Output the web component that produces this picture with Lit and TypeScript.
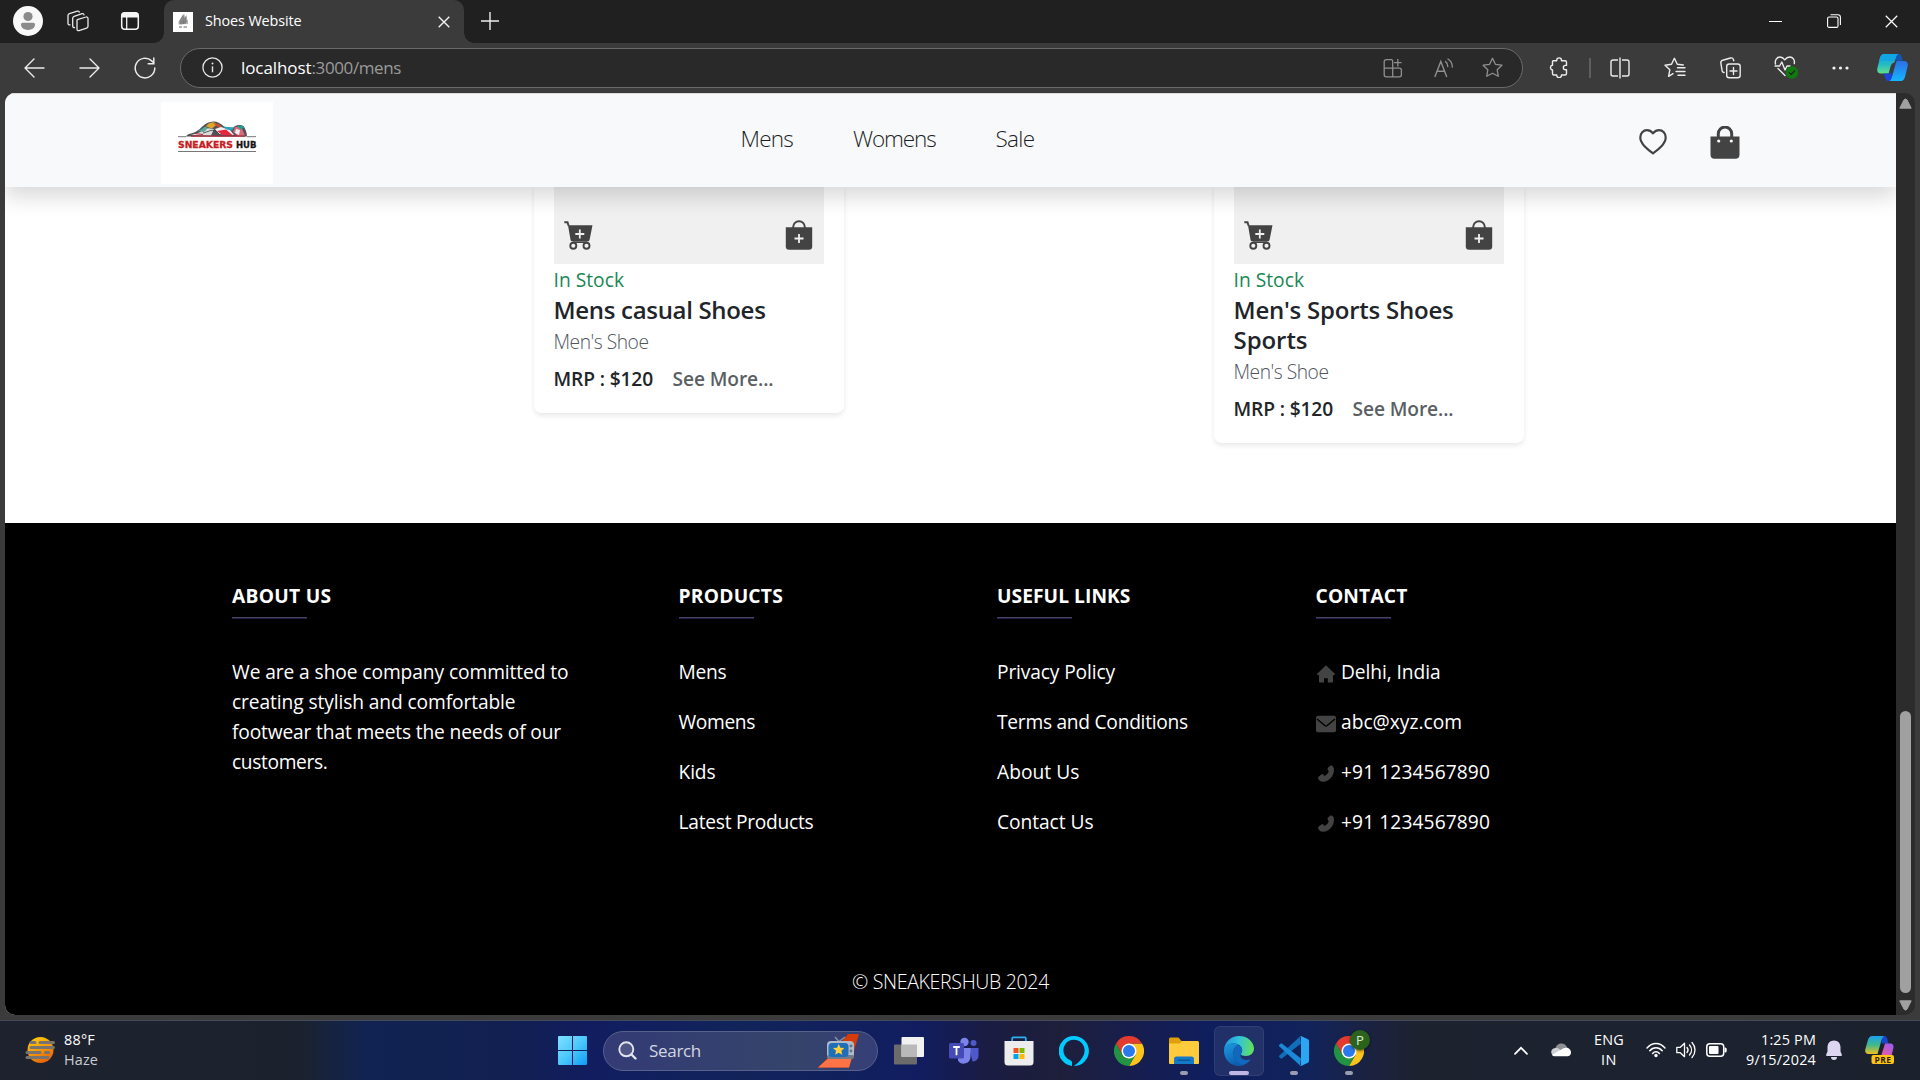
import { LitElement, html, css, TemplateResult } from "lit";
import { customElement, property } from "lit/decorators.js";

/** A run of text whose tracking is adjusted so that it fills a given width. */
@customElement("fit-text")
class FitText extends LitElement {
  @property({ type: Number }) w = 0;
  @property() text = "";
  static styles = css`
    :host { display: block; white-space: pre; overflow: visible; }
    .run { display: inline-block; white-space: pre; }
  `;
  render() {
    return html`<span class="run">${this.text}</span>`;
  }
  updated() {
    const run = this.renderRoot.querySelector(".run") as HTMLElement;
    run.style.letterSpacing = "0px";
    const natural = run.getBoundingClientRect().width;
    if (this.w && this.text.length) {
      run.style.letterSpacing = ((this.w - natural) / this.text.length).toFixed(3) + "px";
      this.style.width = this.w + "px";
    }
  }
}

const t = (text: string, w: number, cls = "") =>
  html`<fit-text class=${cls} .text=${text} .w=${w}></fit-text>`;

/* ---------- browser chrome icons ---------- */
const profile = html`<svg class="ic" width="30" height="30" viewBox="0 0 30 30"><circle cx="15" cy="15" r="15" fill="#f8f8f8"/><circle cx="15" cy="10.5" r="4.6" fill="#8b8b8b"/><path d="M8 18.3a1.6 1.6 0 0 1 1.6-1.6h10.8a1.6 1.6 0 0 1 1.6 1.6c0 3.600-3 5.700-7 5.700s-7-2.100-7-5.700z" fill="#8b8b8b"/></svg>`;
const workspaces = html`<svg class="ic" width="22" height="22" viewBox="0 0 22 22" fill="none" stroke="#e8e8e8" stroke-width="1.3" stroke-linejoin="round" stroke-linecap="round"><path d="M10.300 9.600 19 7a1.500 1.500 0 0 1 2 1.400v7.800a2 2 0 0 1-1.400 1.900L12 20.600a1.500 1.500 0 0 1-2-1.400V10.200z"/><path d="M7.500 17.500a1.500 1.500 0 0 1-1.800-1.500V8.200a2 2 0 0 1 1.400-1.900l8-2.700a1.500 1.500 0 0 1 1.900 1.200"/><path d="M3 14.800A1.500 1.500 0 0 1 1 13.400V5.600a2 2 0 0 1 1.400-1.900l8-2.600a1.500 1.500 0 0 1 1.900 1.100"/></svg>`;
const tabActions = html`<svg class="ic" width="20" height="20" viewBox="0 0 20 20"><rect x="1.700" y="1.700" width="16.600" height="16.600" rx="3" fill="none" stroke="#f5f5f5" stroke-width="1.500"/><path d="M1.500 6.500V4.200a2.700 2.700 0 0 1 2.700-2.700h11.600a2.700 2.700 0 0 1 2.700 2.700v2.300z" fill="#f5f5f5"/><path d="M6.700 6v12" stroke="#f5f5f5" stroke-width="1.300"/></svg>`;
const favicon = html`<svg class="ic" width="20" height="20" viewBox="0 0 20 20"><path d="M0 0h20v20H0z" fill="#fff"/><path d="m5.500 9.500 4-6 1.500-2 1 3 2-1.500-.5 4 1.500 1v4l-9.500.5z" fill="#b4b4b4"/><path d="m7 9 3-5.500.8 4L13 5v6l-6 1zM10.500 8v4M8.500 10l5-1" fill="#8a8a8a" stroke="#777" stroke-width=".7"/><path d="M6 15h3M10.500 15h3.500" stroke="#999" stroke-width="1.500"/></svg>`;
const cross = (s: number, c = "#f2f2f2", sw = 1.4) => html`<svg class="ic" width=${s} height=${s} viewBox="0 0 12 12"><path d="m.7.7 10.600 10.600M11.300.7.7 11.300" stroke=${c} stroke-width=${sw} fill="none"/></svg>`;
const plus = html`<svg class="ic" width="18" height="18" viewBox="0 0 18 18"><path d="M9 0v18M0 9h18" stroke="#ededed" stroke-width="1.400"/></svg>`;
const minimise = html`<svg class="ic" width="13" height="13" viewBox="0 0 13 13"><path d="M0 6.500h13" stroke="#fff" stroke-width="1"/></svg>`;
const restore = html`<svg class="ic" width="14" height="14" viewBox="0 0 14 14" fill="none" stroke="#fff" stroke-width="1.100"><rect x=".6" y="3" width="10.400" height="10.400" rx="1.500"/><path d="M3.500.8h7.500a2.400 2.400 0 0 1 2.400 2.400v7.800"/></svg>`;
const arrow = html`<svg class="ic" width="21" height="20" viewBox="0 0 21 20" fill="none" stroke="#ececec" stroke-width="1.400" stroke-linecap="round" stroke-linejoin="round"><path d="M20 10H1M10 1 1 10l9 9"/></svg>`;
const refresh = html`<svg class="ic" width="22" height="22" viewBox="0 0 22 22" fill="none" stroke="#ececec" stroke-width="1.500" stroke-linecap="round"><path d="M20.800 11A9.800 9.800 0 1 1 17.700 3.900L19.500 5.500"/><path d="M19.800 1v5.700h-5.600"/></svg>`;
const info = html`<svg class="ic" width="21" height="21" viewBox="0 0 21 21"><circle cx="10.500" cy="10.500" r="9.600" fill="none" stroke="#e6e6e6" stroke-width="1.300"/><path d="M10.500 9.300v6" stroke="#e6e6e6" stroke-width="1.400"/><circle cx="10.500" cy="6.400" r="1" fill="#e6e6e6"/></svg>`;
const addApp = html`<svg class="ic" width="20" height="20" viewBox="0 0 20 20" fill="none" stroke="#8f8f8f" stroke-width="1.300"><path d="M9.300 1.600H3.200a2 2 0 0 0-2 2v13.200a2 2 0 0 0 2 2h13.200a2 2 0 0 0 2-2v-4.600a2 2 0 0 0-2-2H1.200M9.700 18.800V3.200a1.600 1.600 0 0 0-1.200-1.600M14.800 1v7.400M11.100 4.700h7.400"/></svg>`;
const readAloud = html`<svg class="ic" width="20" height="20" viewBox="0 0 20 20" fill="none" stroke="#8f8f8f" stroke-width="1.400" stroke-linecap="round"><path d="M1 18.500 6.800 3.500l5.800 15M3 13.300h7.700M11.600 3.600c1.700 1.300 2.200 3 2.200 5M14 1c3 1.900 4.300 4.600 4.300 8"/></svg>`;
const STAR = "m10.500 1.300 2.900 6 6.500.9-4.700 4.600 1.100 6.500-5.800-3.100-5.800 3.100 1.100-6.500L1.100 8.200l6.500-.9z";
const star = html`<svg class="ic" width="21" height="21" viewBox="0 0 21 21"><path d=${STAR} fill="none" stroke="#8f8f8f" stroke-width="1.300" stroke-linejoin="round"/></svg>`;
const puzzle = html`<svg class="ic" width="20" height="21" viewBox="0 0 20 21" fill="none" stroke="#ececec" stroke-width="1.400" stroke-linejoin="round"><path d="M4 3.700h3.700V3.300a2.400 2.400 0 0 1 4.800 0v.4H16a1.500 1.500 0 0 1 1.500 1.500v3.200h-1a2.200 2.200 0 0 0 0 4.400h1v3.700a1.500 1.500 0 0 1-1.500 1.500h-3.500v.2a2.400 2.400 0 0 1-4.800 0v-.2H5A1.500 1.500 0 0 1 3.500 16.500V13a2.400 2.400 0 0 1-.2-4.700h.2V5.200A1.500 1.500 0 0 1 4 3.700z"/></svg>`;
const split = html`<svg class="ic" width="20" height="22" viewBox="0 0 20 22" fill="none" stroke="#ececec" stroke-width="1.400"><path d="M8 3H3a2 2 0 0 0-2 2v12a2 2 0 0 0 2 2h5M12 3h5a2 2 0 0 1 2 2v12a2 2 0 0 1-2 2h-5M10 .5v21"/></svg>`;
const favourites = html`<svg class="ic" width="22" height="21" viewBox="0 0 22 21" fill="none" stroke="#ececec" stroke-width="1.400" stroke-linejoin="round" stroke-linecap="round"><path d="M9 16.600 4.600 19.300l1.200-6.500L1 8.200l6.500-.9 2.900-6 2.900 6 6 .7M13.500 10.800H21M12 14.500h9M14 18.200h7"/></svg>`;
const collections = html`<svg class="ic" width="21" height="22" viewBox="0 0 21 22" fill="none" stroke="#ececec" stroke-width="1.400" stroke-linecap="round"><rect x="6.700" y="7" width="13.500" height="13.800" rx="2.500"/><path d="M13.500 10.500v7M10 14h7M4 15.500l-.6-.2a2.500 2.500 0 0 1-1.300-1.600L.9 6.300A2.500 2.500 0 0 1 2.700 3.200L10.500 1a2.500 2.500 0 0 1 3 1.700l.3 1"/></svg>`;
const essentials = html`<svg class="ic" width="25" height="24" viewBox="0 0 25 24" fill="none" stroke="#ececec" stroke-width="1.400" stroke-linejoin="round" stroke-linecap="round"><path d="M1.500 8C.6 4.400 2.800 1 6 1c2.300 0 3.700 1.300 4.800 2.800C11.900 2.300 13.400 1 15.700 1c3.200 0 5.300 3 4.600 6.500M1 10h4.600l2.200-4 3.200 8 2-4h3M4 12.500l7 7"/><circle cx="18" cy="16.500" r="6.200" fill="#0f7b0f" stroke="none"/><path d="m15.300 16.600 1.900 1.900 3.500-3.700" stroke="#1c2b1c" stroke-width="1.300"/></svg>`;
const dots = html`<svg class="ic" width="17" height="4" viewBox="0 0 17 4" fill="#f2f2f2"><circle cx="2" cy="2" r="1.600"/><circle cx="8.500" cy="2" r="1.600"/><circle cx="15" cy="2" r="1.600"/></svg>`;
const copilot = html`<svg class="ic" width="31" height="27" viewBox="0 0 31 27"><defs><linearGradient id="c1" x1="0" y1="0" x2="0" y2="1"><stop offset="0" stop-color="#1b9de2"/><stop offset=".5" stop-color="#22b8c8"/><stop offset="1" stop-color="#5fe08c"/></linearGradient><linearGradient id="c2" x1="0" y1="0" x2="0" y2="1"><stop offset="0" stop-color="#2b6fe6"/><stop offset="1" stop-color="#16b6ff"/></linearGradient></defs><path d="M19.500 0h2.300c1.800 0 2.500 1.600 3 3.500l1 3.200h-7z" fill="#1356b4"/><path d="M7 0h14c-1.500 1-2 2.500-2.600 4.600l-1 3.900c-2.400.3-3.300 2.200-4 4.500l-1.800 6.500H4C.8 19.500-.4 17 .4 14L2.800 4.600C3.600 1.600 5 0 7 0z" fill="url(#c1)"/><path d="M7 0h14c-1.800 1.400-2.200 4-3 6.700H2.300l.5-2.100C3.600 1.600 5 0 7 0z" fill="#12a5e4"/><path d="M6.500 19.500h6l1.300-3 2 10.500h-4.300c-2.300 0-3-1.600-3.500-3.500z" fill="#1b45d8"/><path d="M24 27H12.500c1.400-1 2-2.500 2.600-4.600l4-14.200c.2-.8.800-1.200 1.600-1.200H27c3.200 0 4.400 2.300 3.600 5.300l-2.400 10C27.400 25.400 26 27 24 27z" fill="url(#c2)"/></svg>`;
const triangle = (down: boolean) => html`<svg class="ic" width="13" height="11" viewBox="0 0 13 11"><path d=${down ? "M.8.800h11.400L8 9.200q-1.500 1.800-3 0z" : "M.8 10.200h11.400L8 1.800q-1.500-1.800-3 0z"} fill="#a0a0a0" stroke="#a0a0a0" stroke-linejoin="round"/></svg>`;

/* ---------- shop icons ---------- */
const logo = html`<svg class="logo" width="112" height="82" viewBox="0 0 112 82">
  <path d="M0 0h112v82H0z" fill="#fff"/>
  <path d="M25 34.500c1-2 3-2.600 6-3.200 4-1 7-3.500 10-6.500 3-3 7-5.300 11.500-5.300 4 0 7.500 2 10.500 5 3 1.600 6 1.600 9.500 1 1.500-2.500 6-3.600 10-1.500 2 3 3.500 7 3.500 10.500z" fill="#4f5259"/>
  <path d="M30 33c6-1.500 11-3 15-7l8 1-3 6.500z" fill="#dcdcda"/>
  <path d="M37 29c3-1 5-3 7-4.500l3 1.500-4 4z" fill="#58a99b"/>
  <path d="M45 24.500c2-3 5-4.400 8-4.200l3 2.200-5 4z" fill="#e0a32b"/>
  <path d="m52 21 6 1 5 5-5-1z" fill="#c8502f"/>
  <path d="m54 27 6-2 9 3 4 5-15-1z" fill="#f5f1f0"/>
  <path d="m56 29 5 4 11 .5-7-6z" fill="#e3283f"/>
  <path d="m62 24.500 4 3 5 1 2-3-6-.5z" fill="#25a5c4"/>
  <path d="m72 30 2-5 6-.5 4 9-7 .5z" fill="#d9697b"/>
  <path d="m76 24 5-.5 2.500 2-4 2z" fill="#269b8d"/>
  <path d="m75 27 4 1-1 5-4-2z" fill="#eee"/>
  <path d="M30 34.200h54M34 31.500l8 1" stroke="#b52736" stroke-width="1.200" fill="none"/>
  <path d="M42 31c5-1 8-4 13-2l4 4" stroke="#33353f" stroke-width=".8" fill="none"/>
  <path d="M17 34.700h8M86 34.700h9M17 49.500h78" stroke="#777" stroke-width="1"/>
  <text x="17" y="45.500" class="l1" textLength="55" lengthAdjust="spacingAndGlyphs">SNEAKERS</text>
  <text x="75" y="45.500" class="l2" textLength="20.500" lengthAdjust="spacingAndGlyphs">HUB</text>
</svg>`;
const heart = html`<svg class="ic" width="28" height="26" viewBox="0 0 28 26"><path d="M14 4.300C12.300 2.300 10.200 1.200 8 1.200c-3.800 0-6.700 3-6.700 7.200 0 3.300 1.600 5.900 4.500 9 2.500 2.600 5.300 4.800 8.200 7 2.900-2.200 5.700-4.400 8.200-7 2.900-3.100 4.500-5.700 4.500-9 0-4.200-2.900-7.200-6.700-7.200-2.200 0-4.300 1.100-6 3.100z" fill="none" stroke="#434343" stroke-width="2.200" stroke-linejoin="round"/></svg>`;
const bag = html`<svg class="ic" width="30" height="33" viewBox="0 0 30 33"><path d="M8.300 11V7.800a6.700 6.700 0 0 1 13.400 0V11" fill="none" stroke="#434343" stroke-width="3"/><path d="M.5 10.500h29v18.300a4 4 0 0 1-4 4h-21a4 4 0 0 1-4-4z" fill="#434343"/><circle cx="8.700" cy="15" r="1.600" fill="#f8f9fb"/><circle cx="21.300" cy="15" r="1.600" fill="#f8f9fb"/></svg>`;
const cartAdd = html`<svg class="ic" width="29" height="29" viewBox="0 0 29 29"><path d="M.3 1.300h3.200l1.100 3.500" fill="none" stroke="#434343" stroke-width="2"/><path d="M4 4.300h24.500l-2.900 14.500a2 2 0 0 1-2 1.700H8.500a2 2 0 0 1-2-1.700z" fill="#434343"/><path d="M15.800 8.500v9M11.300 13h9" stroke="#f0f0f0" stroke-width="1.800"/><circle cx="9.300" cy="24.800" r="3" fill="none" stroke="#434343" stroke-width="1.900"/><circle cx="22.500" cy="24.800" r="3" fill="none" stroke="#434343" stroke-width="1.900"/><path d="M9 21.200h14" stroke="#434343" stroke-width="1.500"/></svg>`;
const bagAdd = html`<svg class="ic" width="28" height="30" viewBox="0 0 28 30"><path d="M8.200 8V7a5.800 5.800 0 0 1 11.600 0v1" fill="none" stroke="#434343" stroke-width="2"/><path d="M.8 7.200h26.400v19.300a3.300 3.300 0 0 1-3.300 3.300H4.100a3.300 3.300 0 0 1-3.300-3.300z" fill="#434343"/><path d="M14 14v9M9.500 18.500h9" stroke="#f0f0f0" stroke-width="1.800"/></svg>`;
const home = html`<svg class="ic" width="20" height="20" viewBox="0 0 20 20"><path d="M10 1.300 1.200 9.800c-.5.500-.2 1.300.5 1.300H3v6.400c0 .6.400 1 1 1h4v-4.300h3.800v4.300h4.200c.6 0 1-.4 1-1v-6.400h1.300c.7 0 1-.8.500-1.300z" fill="#434343"/></svg>`;
const mail = html`<svg class="ic" width="20" height="20" viewBox="0 0 20 20"><rect x="0" y="1.800" width="20" height="16.400" rx="2" fill="#434343"/><path d="m1 5 7.800 6.500q1.200.9 2.400 0L19 5" fill="none" stroke="#000" stroke-width="1.400"/></svg>`;
const phone = html`<svg class="ic" width="20" height="20" viewBox="0 0 20 20"><path d="M14.200 1.700 12.100 3.500c-.8.700-.6 1.600-.2 2.400l.9 1.400c-.8 2-2.200 3.600-4.200 4.700L7.300 10.600c-.7-.5-1.400-.5-2 0L2.800 12.500c-.8.700-.8 1.500-.5 2.300.8 1.800 2.400 2.900 4.700 2.900 6 0 11-6.200 11-11.800 0-2.200-.8-3.500-2.300-4.300-.6-.3-1-.3-1.500.1z" fill="#434343"/></svg>`;

/* ---------- taskbar icons ---------- */
const haze = html`<svg class="ic" width="32" height="28" viewBox="0 0 32 28"><defs><linearGradient id="sun" x1=".2" y1="0" x2=".7" y2="1"><stop offset="0" stop-color="#ffcf0a"/><stop offset="1" stop-color="#e85e08"/></linearGradient></defs><circle cx="16.500" cy="14" r="13" fill="url(#sun)"/><path d="M7 6.500h4M16 6.500h13.500M7 11.500h22.500M3 16.500h13M21.500 16.500h3M3 21.500h21" stroke="#77736f" stroke-width="3" stroke-linecap="round"/></svg>`;
const start = html`<svg class="ic" width="29" height="29" viewBox="0 0 29 29"><defs><linearGradient id="win" x1="0" y1="0" x2="1" y2="1"><stop offset="0" stop-color="#7fe0ff"/><stop offset=".5" stop-color="#4cc8fb"/><stop offset="1" stop-color="#0f9bf6"/></linearGradient></defs><path d="M1 0h13v14H0V1a1 1 0 0 1 1-1zM15 0h13a1 1 0 0 1 1 1v13H15zM0 15h14v14H1a1 1 0 0 1-1-1zM15 15h14v13a1 1 0 0 1-1 1H15z" fill="url(#win)"/></svg>`;
const magnifier = html`<svg class="ic" width="19" height="19" viewBox="0 0 19 19" fill="none" stroke="#e2e4ee" stroke-linecap="round"><circle cx="8.300" cy="8.300" r="7" stroke-width="1.900" fill="#ffffff22"/><path d="m13.500 13.500 4 4" stroke-width="2.400"/></svg>`;
const tv = html`<svg class="ic" width="42" height="34" viewBox="0 0 42 34"><path d="M30 0h11L31 33.500H0L12 22z" fill="#d83b0a"/><path d="M0 33.500 14 21l20 2-3 10.500z" fill="#ff7346"/><path d="m17 3 4 4.500L27 3" stroke="#8793a5" fill="none" stroke-width="1.300"/><rect x="9" y="7" width="27" height="17" rx="4" fill="#b1bac6"/><rect x="9" y="21" width="27" height="4" rx="2" fill="#717b8b"/><rect x="10.500" y="9" width="20" height="14" rx="3.500" fill="#1d6fba"/><path d="m20.700 10 1.700 3.700 4 .4-3 2.700.9 4-3.600-2.100-3.500 2.100.8-4-3-2.700 4.100-.4z" fill="#ffd03b"/><circle cx="33" cy="12" r="1.400" fill="#687286"/><circle cx="33" cy="17" r="1.400" fill="#687286"/></svg>`;
const taskView = html`<svg class="ic" width="30" height="28" viewBox="0 0 30 28"><rect x="0" y="7.500" width="23" height="20" rx="1" fill="#6b6b6b"/><rect x="7.500" y="0" width="22.500" height="20" rx="1" fill="#f1f1f1"/><path d="M7.500 7.500H23V20H7.500z" fill="#b9b9b9"/></svg>`;
const teams = html`<svg class="ic" width="30" height="28" viewBox="0 0 30 28"><circle cx="24.500" cy="6" r="3" fill="#5059c9"/><path d="M20 11h9.500v8a5.500 5.500 0 0 1-6 5.500z" fill="#5059c9"/><circle cx="15.500" cy="5" r="4.200" fill="#7b83eb"/><path d="M9 11h12.500v9a6.800 6.800 0 0 1-12.500 3.500z" fill="#7b83eb"/><rect x="0" y="6" width="15" height="15.500" rx="1.500" fill="#444bb6"/><path d="M4.200 10h6.600M7.500 10v8.200" stroke="#fff" stroke-width="1.800"/></svg>`;
const store = html`<svg class="ic" width="30" height="30" viewBox="0 0 30 30"><path d="M8.200 5V2.200a.9.900 0 0 1 .9-.9h11.800a.9.900 0 0 1 .9.900V5" fill="none" stroke="#2cb1ee" stroke-width="1.700"/><path d="M.5 5h29v21a3.500 3.500 0 0 1-3.500 3.500H4A3.500 3.500 0 0 1 .500 26z" fill="#ededed"/><path d="M9.500 12h5v5h-5z" fill="#f25022"/><path d="M15.500 12h5v5h-5z" fill="#7fba00"/><path d="M9.500 18h5v5h-5z" fill="#00a4ef"/><path d="M15.500 18h5v5h-5z" fill="#ffb900"/></svg>`;
const alexa = html`<svg class="ic" width="30" height="30" viewBox="0 0 30 30"><path fill-rule="evenodd" d="M15 0a15 15 0 0 0-2 29.900v-3.600C12.900 24.600 11 24 9 23a10.600 10.600 0 1 1 16.600-8.600C25.500 21 20 26 14.800 30A15 15 0 0 0 15 0z" fill="#00caff"/></svg>`;
const chrome = html`<svg class="ic" width="30" height="30" viewBox="0 0 30 30"><path d="M28 7.500A15 15 0 0 1 15 30l6.500-11.300L15 15V7.500z" fill="#fcc31c"/><path d="M2 7.500 8.500 18.800 15 15V7.500h13a15 15 0 0 0-26 0z" fill="#e33b2e"/><path d="M2 7.500 8.500 18.800 15 15l6.500 3.700L15 30A15 15 0 0 1 2 7.500z" fill="#229342"/><circle cx="15" cy="15" r="7.500" fill="#fff"/><circle cx="15" cy="15" r="6" fill="#2a79ee"/></svg>`;
const folder = html`<svg class="ic" width="30" height="28" viewBox="0 0 30 28"><path d="M0 2a1.500 1.500 0 0 1 1.500-1.500h8L12.500 4H29v8H0z" fill="#e09f06"/><path d="M0 6.500h10.500L13 4h15.500A1.500 1.500 0 0 1 30 5.500V26a1 1 0 0 1-1 1H1a1 1 0 0 1-1-1z" fill="#ffcb3d"/><path d="M5 27v-5a2.500 2.500 0 0 1 2.500-2.500h15A2.500 2.500 0 0 1 25 22v5z" fill="#1579c9"/><path d="M8.500 23.300h13" stroke="#0a5596" stroke-width="1.300"/></svg>`;
const edge = html`<svg class="ic" width="30" height="30" viewBox="0 0 30 30"><defs><linearGradient id="e1" x1="0" y1=".3" x2="1" y2=".4"><stop offset="0" stop-color="#1f96e0"/><stop offset=".5" stop-color="#33c4d8"/><stop offset="1" stop-color="#63e05a"/></linearGradient><linearGradient id="e2" x1="0" y1="0" x2=".5" y2="1"><stop offset="0" stop-color="#1b9de2"/><stop offset="1" stop-color="#0b5cae"/></linearGradient></defs><path d="M0 14C.5 6 7 0 15 0c9 0 15 6.500 15 12.500 0 4.500-3.500 7.500-8 7.500-3.500 0-5-1-5-2 0-.8 1.200-1.500 1.200-3.700C18.200 10 14 7.500 9.700 7.500 5 7.500 1.300 10 0 14z" fill="url(#e1)"/><path d="M0 14c1-4 5-6.500 9.500-6.500 2 0 4 .6 5.500 1.500-3.500 1-5.500 4-5.500 8C9.500 23.500 15 28.500 20 29c-1.500.6-3.300 1-5 1C6.500 30 0 23.300 0 15z" fill="url(#e2)"/><path d="M9.500 17c0-4 2.500-7 5.500-8 2 1 3.200 3 3.200 5.300 0 2.200-1.200 2.900-1.200 3.700-2.500 4.500 4.500 7.500 9.800 5.300-1.800 3-5 5-7.800 5.700C14 28.500 9.500 23.500 9.500 17z" fill="#1268bd"/></svg>`;
const vscode = html`<svg class="ic" width="30" height="30" viewBox="0 0 30 30"><path d="M22 7.500 3.200 22.300a1.200 1.200 0 0 1-1.600 0l-1.200-1.100a1.200 1.200 0 0 1 0-1.800L21 .6z" fill="#0f6fb8"/><path d="M22 22.500 3.200 7.700a1.200 1.200 0 0 0-1.600 0L.4 8.800a1.200 1.200 0 0 0 0 1.800L21 29.400z" fill="#1a8ad6"/><path d="M22 0l7 3.300a1.800 1.800 0 0 1 1 1.600v20.200a1.800 1.800 0 0 1-1 1.600L22 30c-.8 0-1.200-.3-1.500-.8 1 .6 1.500 0 1.500-1V1.800c0-1-.6-1.500-1.500-1 .3-.500.9-.8 1.500-.8z" fill="#2aa6f2"/></svg>`;
const caret = html`<svg class="ic" width="14" height="9" viewBox="0 0 14 9"><path d="m1 7.800 6-6 6 6" fill="none" stroke="#fff" stroke-width="1.700" stroke-linecap="round"/></svg>`;
const cloud = html`<svg class="ic" width="20" height="14" viewBox="0 0 20 14"><path d="M4 7c.5-4 3-6.500 6.300-6.500 2.700 0 5 1.600 5.900 4.200L12 9z" fill="#8e9096"/><path d="M3.500 12.500C-.7 12.500-1 6.200 3.300 5.300c2.200-.6 4 0 5.200 1L15 10z" fill="#cfd0d3"/><path d="M3.500 13.300A3 3 0 0 1 .9 11.700L9.500 7l3-1.700c4-1.800 7.500.7 7.500 4.200 0 2-1.400 3.800-3.700 3.800z" fill="#fff"/></svg>`;
const wifi = html`<svg class="ic" width="20" height="16" viewBox="0 0 20 16" fill="none" stroke="#fff" stroke-width="1.500" stroke-linecap="round"><path d="M1 6C6 0 14 0 19 6M3.800 8.800c3.500-4 8.900-4 12.400 0M6.600 11.500c2-2.300 4.800-2.300 6.800 0"/><circle cx="10" cy="13.500" r="1.700" fill="#fff" stroke="none"/></svg>`;
const volume = html`<svg class="ic" width="20" height="18" viewBox="0 0 20 18" fill="none" stroke="#fff" stroke-width="1.300" stroke-linecap="round" stroke-linejoin="round"><path d="M.8 6.300h3.500L8.500 2.300v13.400L4.300 11.700H.8z"/><path d="M11 6.500c1.300 1.500 1.300 3.500 0 5M13.500 4c2.700 3 2.700 7 0 10M16 1.500c4 4.300 4 10.700 0 15"/></svg>`;
const battery = html`<svg class="ic" width="21" height="14" viewBox="0 0 21 14"><rect x=".8" y=".8" width="16.900" height="12.400" rx="3" fill="none" stroke="#fff" stroke-width="1.500"/><rect x="3" y="3" width="9.500" height="8" rx="1" fill="#fff"/><path d="M18.500 4.500h.7a1.500 1.500 0 0 1 1.500 1.500v2a1.500 1.500 0 0 1-1.500 1.500h-.7z" fill="#fff"/></svg>`;
const bell = html`<svg class="ic" width="16" height="20" viewBox="0 0 16 20" fill="#dcd6f0"><path d="M8 .5c3.800 0 6.500 2.800 6.500 6.500v4.500l1.300 3c.3.700-.1 1.500-1 1.500H1.200c-.9 0-1.300-.8-1-1.500l1.300-3V7C1.500 3.300 4.200.5 8 .5zM5 17h6a3 3 0 0 1-6 0z"/></svg>`;
const copilotPre = html`<svg class="ic" width="30" height="28" viewBox="0 0 30 28"><defs><linearGradient id="p1" x1="0" y1="0" x2="0" y2="1"><stop offset="0" stop-color="#1aa0f0"/><stop offset=".5" stop-color="#3fb98a"/><stop offset="1" stop-color="#f0c020"/></linearGradient><linearGradient id="p2" x1=".8" y1="0" x2=".2" y2="1"><stop offset="0" stop-color="#a35af0"/><stop offset=".6" stop-color="#e05aa8"/><stop offset="1" stop-color="#ff8a5a"/></linearGradient></defs><path d="M17 0h2.500c1.500 0 2.500 1.500 3 3.500l1 4h-7z" fill="#1a45c8"/><path d="M7 0h12c-2 1.500-2.500 4-3.200 6.500L12.500 18H3.500C.7 18-.4 16 .4 13L2.800 4.600C3.600 1.600 5 0 7 0z" fill="url(#p1)"/><path d="M20 7.500h5c3 0 4 2 3.300 5L26 22c-.6 2.500-2 4-4 4h-9c2-1.500 2.500-3.500 3-5.500z" fill="url(#p2)"/><rect x="6.500" y="19" width="22.500" height="9" rx="2" fill="#ffc414"/><text x="9.500" y="26.500" class="pre" textLength="16.500">PRE</text></svg>`;

interface Product { title: [string, number][]; kind: string; }
const products: Product[] = [
  { title: [["Mens casual Shoes", 212]], kind: "Men's Shoe" },
  { title: [["Men's Sports Shoes", 220], ["Sports", 74]], kind: "Men's Shoe" },
];

interface Column { head: string; hw: number; items: { text: string; w: number; icon?: TemplateResult }[]; }
const columns: Column[] = [
  { head: "PRODUCTS", hw: 104.500, items: [{ text: "Mens", w: 47.800 }, { text: "Womens", w: 76.500 }, { text: "Kids", w: 37 }, { text: "Latest Products", w: 135 }] },
  { head: "USEFUL LINKS", hw: 133.500, items: [{ text: "Privacy Policy", w: 118 }, { text: "Terms and Conditions", w: 191 }, { text: "About Us", w: 82.500 }, { text: "Contact Us", w: 96.500 }] },
  { head: "CONTACT", hw: 92, items: [{ text: "Delhi, India", w: 99.500, icon: home }, { text: "abc@xyz.com", w: 121, icon: mail }, { text: "+91 1234567890", w: 149, icon: phone }, { text: "+91 1234567890", w: 149, icon: phone }] },
];
const about: [string, number][] = [
  ["We are a shoe company committed to", 336.500],
  ["creating stylish and comfortable", 283.500],
  ["footwear that meets the needs of our", 329],
  ["customers.", 95.500],
];

@customElement("app-root")
class AppRoot extends LitElement {
  static styles = css`
    :host { display: block; font-family: "Open Sans", "Noto Sans", sans-serif; }
    * { box-sizing: border-box; }
    .ic, .logo { display: block; flex: none; }
    .screen { width: 1920px; height: 1080px; display: flex; flex-direction: column; background: #3b3b3b; overflow: hidden; color: #fff; }

    .tabs { height: 43px; flex: none; background: #202020; display: flex; align-items: center; padding: 0 0 1px 13px; }
    .tools { display: flex; align-items: center; gap: 24px; width: 142px; }
    .tools .wide { margin-left: 7px; }
    .tab { position: relative; width: 300px; height: 43px; margin: 0 0 -1px 9px; background: #3b3b3b; border-radius: 10px 10px 0 0; display: flex; align-items: center; padding: 0 14px 0 9px; }
    .tab::before, .tab::after { content: ""; position: absolute; bottom: 0; width: 10px; height: 10px; }
    .tab::before { left: -10px; background: radial-gradient(circle at 0 0, transparent 9.500px, #3b3b3b 10px); }
    .tab::after { right: -10px; background: radial-gradient(circle at 100% 0, transparent 9.500px, #3b3b3b 10px); }
    .tab .name { margin: -1px auto 0 12px; font-size: 14.400px; line-height: 20px; }
    .new { margin-left: 17px; }
    .wins { margin-left: auto; display: flex; align-items: center; gap: 44.500px; padding-right: 22px; }

    .bar { height: 50px; flex: none; display: flex; align-items: center; padding: 0 0 1px 24px; }
    .navs { display: flex; align-items: center; gap: 34px; width: 156px; }
    .flip { transform: scaleX(-1); }
    .addr { width: 1343px; height: 40px; border: 1px solid #6a6a6a; border-radius: 20px; background: #292929; display: flex; align-items: center; padding: 0 19px 0 21px; }
    .url { display: flex; margin: 0 auto 0 18px; font-size: 17px; line-height: 24px; }
    .url .rest { color: #9b9b9b; }
    .in { display: flex; align-items: center; gap: 31px; }
    .in > :nth-child(2) { margin-right: -3px; }
    .ext { display: flex; align-items: center; margin-left: 26px; }
    .sep { width: 2px; height: 20px; background: #5e5e5e; margin: 0 19px 0 20px; }
    .more { display: flex; align-items: center; gap: 34px; }
    .more > :nth-child(4) { margin: 0 -1px; }
    .cop { margin-left: 28px; }

    .win { height: 922px; flex: none; margin: 0 5px; width: 1910px; display: flex; border-radius: 10px; overflow: hidden; background: #2c2c2c; }
    .view { width: 1891px; background: #fff; display: flex; flex-direction: column; overflow: hidden; }
    .scroll { width: 19px; display: flex; flex-direction: column; align-items: center; padding: 5px 0 4px; }
    .scroll .thumb { width: 11px; height: 282px; border-radius: 5.500px; background: #a0a0a0; margin: auto 0 7px; }

    header { position: relative; z-index: 1; height: 94px; flex: none; background: #f8f9fb; border-top: 1px solid #dcdcdc; box-shadow: 0 10px 20px rgba(0, 0, 0, 0.15); display: flex; align-items: center; padding: 0 156px 0 156px; }
    .logo { margin-top: 4px; }
    .l1, .l2 { font: 700 8.500px "DejaVu Sans", sans-serif; }
    .l1 { fill: #c81c24; stroke: #c81c24; stroke-width: 0.300; }
    .l2 { fill: #161616; stroke: #161616; stroke-width: 0.300; }
    nav { display: flex; gap: 60px; margin: 0 0 3px 467.500px; color: #1b1f23; font-size: 22.500px; font-weight: 300; line-height: 36px; }
    .acts { margin-left: auto; display: flex; align-items: center; gap: 43px; padding-top: 3px; }

    main { height: 336px; flex: none; display: grid; grid-template-columns: 310px 310px; column-gap: 370px; padding-left: 529px; align-items: start; color: #212529; }
    .card { padding: 0 20px 19px; border-radius: 0 0 8px 8px; box-shadow: 0 2.500px 5px rgba(0, 0, 0, 0.085); font-size: 19.200px; line-height: 30px; }
    .shot { height: 77px; background: #f0f0f0; display: flex; align-items: flex-end; justify-content: space-between; padding: 0 11px 14px 10px; margin-bottom: 1px; }
    .stock { color: #198754; }
    .title { font-size: 24px; font-weight: 600; }
    .card fit-text { margin-left: -0.500px; }
    .kind { margin-top: 2px; font-weight: 300; color: #50565c; }
    .price { display: flex; gap: 20px; margin-top: 7px; font-weight: 600; }
    .see { color: #5a5f64; }

    footer { flex: 1; background: #000; display: flex; flex-direction: column; padding-top: 61px; font-size: 19.200px; line-height: 30px; color: #fff; }
    .cols { display: grid; grid-template-columns: 446.500px 318.500px 318.500px 318.500px; padding-left: 227px; }
    .head { font-weight: 700; line-height: 24px; }
    .rule { width: 75px; height: 2px; margin: 9px 0 38px; background: #241d4c; border-top: 1px solid #494558; }
    .list { display: flex; flex-direction: column; gap: 20px; }
    .item { display: flex; gap: 5.500px; height: 30px; }
    .item .ic { margin-top: 7px; }
    .copy { margin: 130px auto 0; font-weight: 300; font-size: 19.500px; }

    .task { margin-top: 5px; height: 60px; border-top: 1px solid #444a5c; display: flex; align-items: center; font-size: 14.400px; line-height: 20px;
      background: linear-gradient(90deg, #1d222e 0, #1b222e 300px, #112352 365px, #112050 500px, #111d60 600px, #11245a 740px, #111d60 920px, #1b1c42 990px, #1d1f3a 1060px, #161e50 1140px, #0f1e5e 1210px, #11235a 1310px, #1b2240 1370px, #1d222f 1420px, #1b222e 100%); }
    .weather { width: 547px; display: flex; align-items: center; gap: 8px; padding: 0 0 1px 24px; }
    .dim { color: #c9ccd2; }
    .cell { position: relative; width: 50px; height: 50px; display: flex; align-items: center; justify-content: center; border-radius: 6px; flex: none; }
    .apps { display: flex; gap: 5px; margin-left: 6px; }
    .apps .open::after { content: ""; position: absolute; bottom: 1px; left: 21px; width: 8px; height: 4px; border-radius: 2px; background: #9a9db0; }
    .apps .active { background: #ffffff14; border: 1px solid #ffffff12; }
    .apps .active::after { left: 14px; width: 20px; bottom: 0; background: #c0b7e6; }
    .badge { position: absolute; right: 4px; top: 4px; width: 20px; height: 20px; border-radius: 50%; background: #2c631c; color: #dcebd6; font-size: 13px; line-height: 20px; text-align: center; box-shadow: 0 1px 3px #0009; }
    .seek { width: 275px; height: 40px; margin-left: 6px; border-radius: 20px; border: 1px solid #57618a; background: linear-gradient(90deg, #343b76, #34446a 70%, #363f78); display: flex; align-items: center; padding: 0 17px 0 14px; }
    .seek .word { margin: 0 auto 0 12px; font-size: 17px; line-height: 24px; color: #d3d6e2; }
    .tray { margin-left: auto; display: flex; align-items: center; padding: 0 25px 1px 0; }
    .gap { width: 23px; }
    .lang { display: flex; flex-direction: column; align-items: center; margin: 0 22px 0 23px; }
    .net { display: flex; align-items: center; gap: 10px; }
    .clock { display: flex; flex-direction: column; align-items: flex-end; margin: 0 10px 0 19px; }
    .pre { font: 700 8.500px "Open Sans", sans-serif; fill: #2a1f00; }
  `;

  private card(p: Product) {
    return html`<article class="card">
      <div class="shot">${cartAdd}${bagAdd}</div>
      ${t("In Stock", 70.500, "stock")}
      ${p.title.map(([s, w]) => t(s, w, "title"))}
      ${t(p.kind, 95, "kind")}
      <div class="price">${t("MRP : $120", 99.500)}${t("See More...", 101, "see")}</div>
    </article>`;
  }

  private column(c: Column) {
    return html`<section>
      ${t(c.head, c.hw, "head")}
      <div class="rule"></div>
      <div class="list">${c.items.map((i) => html`<div class="item">${i.icon ?? ""}${t(i.text, i.w)}</div>`)}</div>
    </section>`;
  }

  render() {
    return html`<div class="screen">
      <div class="tabs">
        <div class="tools">${profile}${workspaces}<span class="wide">${tabActions}</span></div>
        <div class="tab">${favicon}${t("Shoes Website", 96.500, "name")}${cross(12)}</div>
        <div class="new">${plus}</div>
        <div class="wins">${minimise}${restore}${cross(13, "#fff", 1.100)}</div>
      </div>
      <div class="bar">
        <div class="navs">${arrow}<span class="flip">${arrow}</span>${refresh}</div>
        <div class="addr">
          ${info}
          <div class="url">${t("localhost", 70.500)}${t(":3000/mens", 89.500, "rest")}</div>
          <div class="in">${addApp}${readAloud}${star}</div>
        </div>
        <div class="ext">${puzzle}<div class="sep"></div>
          <div class="more">${split}${favourites}${collections}${essentials}${dots}</div>
          <span class="cop">${copilot}</span>
        </div>
      </div>
      <div class="win">
        <div class="view">
          <header>
            ${logo}
            <nav>${t("Mens", 52.500)}${t("Womens", 82.500)}${t("Sale", 39)}</nav>
            <div class="acts">${heart}${bag}</div>
          </header>
          <main>${products.map((p) => this.card(p))}</main>
          <footer>
            <div class="cols">
              <section>
                ${t("ABOUT US", 99.500, "head")}
                <div class="rule"></div>
                ${about.map(([s, w]) => t(s, w))}
              </section>
              ${columns.map((c) => this.column(c))}
            </div>
            ${t("© SNEAKERSHUB 2024", 197, "copy")}
          </footer>
        </div>
        <div class="scroll">${triangle(false)}<div class="thumb"></div>${triangle(true)}</div>
      </div>
      <div class="task">
        <div class="weather">${haze}<div>${t("88°F", 31)}${t("Haze", 34, "dim")}</div></div>
        <div class="cell">${start}</div>
        <div class="seek">${magnifier}${t("Search", 52, "word")}${tv}</div>
        <div class="apps">
          <div class="cell">${taskView}</div>
          <div class="cell">${teams}</div>
          <div class="cell">${store}</div>
          <div class="cell">${alexa}</div>
          <div class="cell">${chrome}</div>
          <div class="cell open">${folder}</div>
          <div class="cell open active">${edge}</div>
          <div class="cell open">${vscode}</div>
          <div class="cell open">${chrome}<span class="badge">P</span></div>
        </div>
        <div class="tray">
          ${caret}<span class="gap"></span>${cloud}
          <div class="lang">${t("ENG", 30)}${t("IN", 16)}</div>
          <div class="net">${wifi}${volume}${battery}</div>
          <div class="clock">${t("1:25 PM", 55)}${t("9/15/2024", 70)}</div>
          ${bell}<span class="gap"></span>${copilotPre}
        </div>
      </div>
    </div>`;
  }
}
